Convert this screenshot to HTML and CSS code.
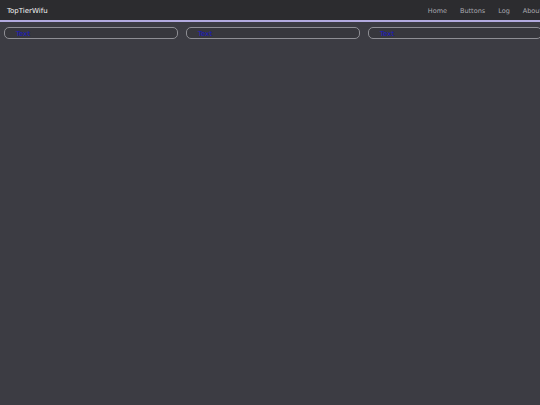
FILE: index.html
```html
<!DOCTYPE html>
<html>
<head>
<meta charset="utf-8">
<link rel="stylesheet" href="styles.css">
</head>
<body>
<div class="page">
  <nav class="nav">
    <div class="brand">TopTierWifu</div>
    <div class="links">
      <a href="#">Home</a>
      <a href="#">Buttons</a>
      <a href="#">Log</a>
      <a href="#">About</a>
    </div>
  </nav>
  <div class="grid">
    <div class="card"><a href="#">Text</a></div>
    <div class="card"><a href="#">Text</a></div>
    <div class="card"><a href="#">Text</a></div>
  </div>
</div>
</body>
</html>
```
FILE: styles.css
```css
html, body {
  margin: 0;
  padding: 0;
  background: #3c3c43;
  overflow: hidden;
}
.page {
  width: 548px;
  font-family: "DejaVu Sans", sans-serif;
  font-size: 7px;
}
.nav {
  height: 18px;
  padding: 2px 6px 0 7px;
  background: #2c2c2f;
  border-bottom: 2px solid #b3abe0;
  display: flex;
  align-items: center;
  justify-content: space-between;
}
.brand {
  color: #f2f2f2;
  font-size: 7px;
}
.links {
  display: flex;
  gap: 13px;
}
.links a {
  color: #a9a9b0;
  text-decoration: none;
  font-size: 6.5px;
}
.grid {
  display: grid;
  grid-template-columns: repeat(3, 174px);
  gap: 8px;
  padding: 5px 4px;
}
.card {
  height: 9px;
  border: 1px solid #8e8e94;
  border-radius: 5px;
  background: #37373d;
  padding: 1px 0 0 11px;
  display: flex;
  align-items: center;
}
.card a {
  color: #1a17c8;
  text-decoration: none;
  font-size: 7px;
}
```
